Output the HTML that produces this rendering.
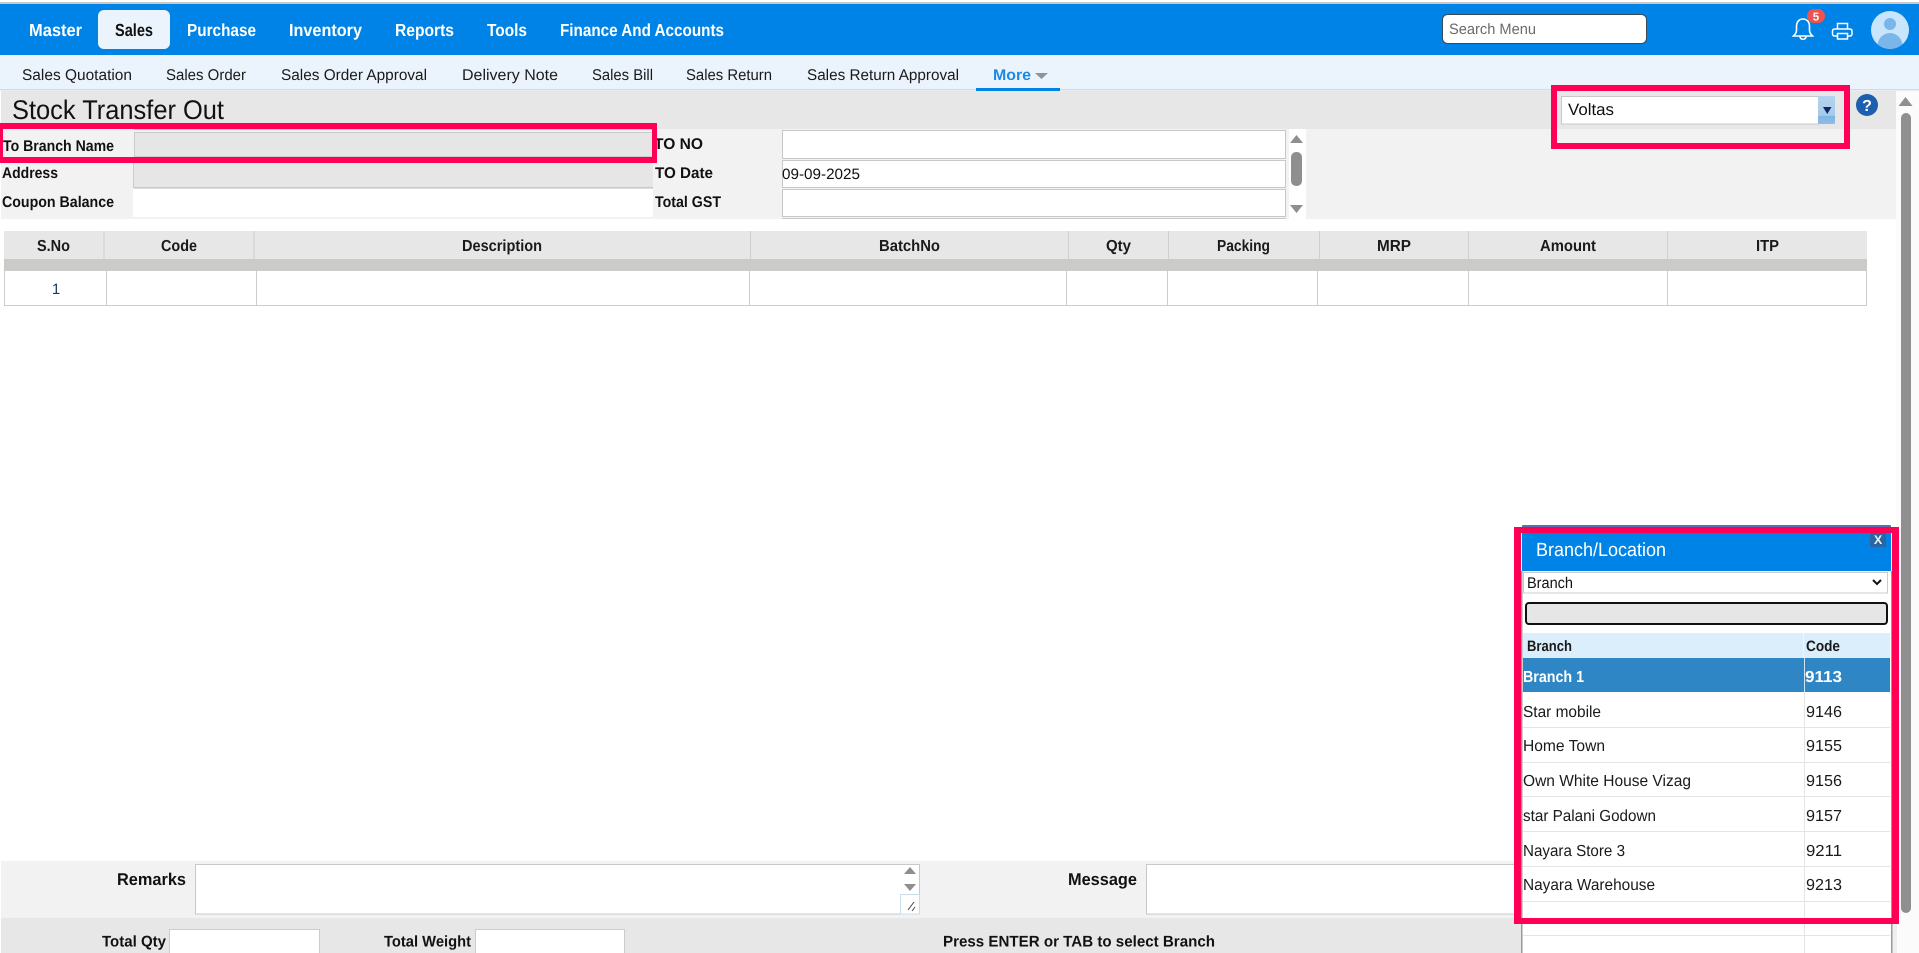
<!DOCTYPE html>
<html lang="en">
<head>
<meta charset="utf-8">
<title>Stock Transfer Out</title>
<style>
html,body{margin:0;padding:0;background:#fff;width:1919px;height:953px;overflow:hidden}
svg{display:block}
text{font-family:"Liberation Sans",Arial,sans-serif;fill:#111;text-rendering:geometricPrecision}
.nav{font-size:17.500px;font-weight:700;fill:#fff}
.sub{font-size:15.500px;fill:#1a1a1a}
.lab{font-size:15.500px;font-weight:700;fill:#111}
.hd{font-size:16px;font-weight:700;fill:#1a1a1a}
.big{font-size:17px;font-weight:700;fill:#111}
.row{font-size:16px;fill:#1a1a1a}
</style>
</head>
<body>
<svg xmlns="http://www.w3.org/2000/svg" width="1919" height="953" viewBox="0 0 1919 953">
<defs>
<linearGradient id="vb" x1="0" y1="0" x2="0" y2="1"><stop offset="0" stop-color="#b5d3ee"/><stop offset=".7" stop-color="#a5cbeb"/><stop offset=".72" stop-color="#7fb5e3"/><stop offset="1" stop-color="#8dbde6"/></linearGradient>
<clipPath id="av"><circle cx="1890" cy="30" r="19"/></clipPath>
</defs>
<rect width="1919" height="953" fill="#fff"/>
<!-- top bars -->
<rect y="2" width="1919" height="2" fill="#c9c9c9"/>
<rect y="4" width="1919" height="51" fill="#0083e6"/>
<rect x="98" y="10" width="72" height="39" rx="6" fill="#ebf4fc"/>
<text class="nav" x="29" y="36" textLength="53" lengthAdjust="spacingAndGlyphs">Master</text>
<text class="nav" x="115" y="36" textLength="38" lengthAdjust="spacingAndGlyphs" style="fill:#111">Sales</text>
<text class="nav" x="187" y="36" textLength="69" lengthAdjust="spacingAndGlyphs">Purchase</text>
<text class="nav" x="289" y="36" textLength="73" lengthAdjust="spacingAndGlyphs">Inventory</text>
<text class="nav" x="395" y="36" textLength="59" lengthAdjust="spacingAndGlyphs">Reports</text>
<text class="nav" x="487" y="36" textLength="40" lengthAdjust="spacingAndGlyphs">Tools</text>
<text class="nav" x="560" y="36" textLength="164" lengthAdjust="spacingAndGlyphs">Finance And Accounts</text>
<!-- search -->
<rect x="1442.500" y="14.500" width="204" height="29" rx="5" fill="#fff" stroke="#3a4a55"/>
<text x="1449" y="34" font-size="15" style="fill:#6b6b6b" textLength="87" lengthAdjust="spacingAndGlyphs">Search Menu</text>
<!-- bell -->
<path d="M1803 19c-4 0-6.500 3-6.500 7.500v4c0 2.500-1.500 4-3 5.500h19c-1.500-1.500-3-3-3-5.500v-4c0-4.500-2.500-7.500-6.500-7.500z" fill="none" stroke="#fff" stroke-width="1.600"/>
<path d="M1800 36.500a3 2.800 0 0 0 6 0" fill="none" stroke="#fff" stroke-width="1.600"/>
<rect x="1807" y="9" width="18" height="14" rx="7" fill="#ef5350"/>
<text x="1816" y="20.500" font-size="11.500" font-weight="700" text-anchor="middle" style="fill:#fff">5</text>
<!-- printer -->
<path d="M1837.500 29v-5.500h10V29M1837.500 36h-3a2 2 0 0 1-2-2v-3a2 2 0 0 1 2-2h15.500a2 2 0 0 1 2 2v3a2 2 0 0 1-2 2h-2.500M1837.500 33.500h10v5.500h-10z" fill="none" stroke="#fff" stroke-width="1.500"/>
<!-- avatar -->
<circle cx="1890" cy="30" r="19" fill="#c8e5fc"/>
<g clip-path="url(#av)"><circle cx="1890" cy="24" r="6" fill="#7ab6ea"/><ellipse cx="1890" cy="46" rx="12.500" ry="13" fill="#7ab6ea"/></g>
<!-- subnav -->
<rect y="55" width="1919" height="34" fill="#ebf4fc"/>
<rect y="89" width="1919" height="1.500" fill="#cfdbe6"/>
<text class="sub" x="22" y="80" textLength="110" lengthAdjust="spacingAndGlyphs">Sales Quotation</text>
<text class="sub" x="166" y="80" textLength="80" lengthAdjust="spacingAndGlyphs">Sales Order</text>
<text class="sub" x="281" y="80" textLength="146" lengthAdjust="spacingAndGlyphs">Sales Order Approval</text>
<text class="sub" x="462" y="80" textLength="96" lengthAdjust="spacingAndGlyphs">Delivery Note</text>
<text class="sub" x="592" y="80" textLength="61" lengthAdjust="spacingAndGlyphs">Sales Bill</text>
<text class="sub" x="686" y="80" textLength="86" lengthAdjust="spacingAndGlyphs">Sales Return</text>
<text class="sub" x="807" y="80" textLength="152" lengthAdjust="spacingAndGlyphs">Sales Return Approval</text>
<text x="993" y="80" font-size="15.500" font-weight="700" style="fill:#1e88e5" textLength="38" lengthAdjust="spacingAndGlyphs">More</text>
<path d="M1035 73h13l-6.500 6z" fill="#8a949c"/>
<rect x="976" y="88" width="84" height="3" fill="#0083e6"/>
<!-- heading band + form -->
<rect x="1" y="91" width="1895" height="38" fill="#e7e7e7"/>
<rect x="1" y="129" width="1895" height="90" fill="#f2f2f2"/>
<text x="12" y="119" font-size="27" style="fill:#111" textLength="212" lengthAdjust="spacingAndGlyphs">Stock Transfer Out</text>
<!-- left form -->
<rect x="134" y="129" width="518" height="1" fill="#ccc"/>
<rect x="134.500" y="132.500" width="518" height="24" fill="#e6e6e6" stroke="#cbcbcb"/>
<rect x="134" y="163" width="519" height="25" fill="#e6e6e6"/>
<rect x="134" y="187" width="519" height="1.500" fill="#c8c8c8"/>
<rect x="133" y="163" width="1" height="25" fill="#ccc"/>
<rect x="133" y="189" width="520" height="28" fill="#fff"/>
<text class="lab" x="3" y="151" textLength="111" lengthAdjust="spacingAndGlyphs">To Branch Name</text>
<text class="lab" x="2" y="178" textLength="56" lengthAdjust="spacingAndGlyphs">Address</text>
<text class="lab" x="2" y="207" textLength="112" lengthAdjust="spacingAndGlyphs">Coupon Balance</text>
<text class="lab" x="654" y="149" textLength="49" lengthAdjust="spacingAndGlyphs">TO NO</text>
<text class="lab" x="655" y="178" textLength="58" lengthAdjust="spacingAndGlyphs">TO Date</text>
<text class="lab" x="655" y="207" textLength="66" lengthAdjust="spacingAndGlyphs">Total GST</text>
<!-- right inputs -->
<rect x="782.500" y="130.500" width="503" height="28" fill="#fff" stroke="#c8c8c8"/>
<rect x="782.500" y="160.500" width="503" height="27" fill="#fff" stroke="#c8c8c8"/>
<rect x="782.500" y="189.500" width="503" height="27" fill="#fff" stroke="#c8c8c8"/>
<rect x="782" y="218" width="504" height="1" fill="#c8c8c8"/>
<text x="782" y="179" font-size="15" font-weight="400" style="fill:#111" textLength="78" lengthAdjust="spacingAndGlyphs">09-09-2025</text>
<!-- inner scrollbar -->
<rect x="1289" y="129" width="17" height="90" fill="#fff"/>
<path d="M1296.500 135l6.500 8h-13z" fill="#8f8f8f"/>
<rect x="1291" y="152" width="11" height="34" rx="5" fill="#8f8f8f"/>
<path d="M1296.500 213l-6.500-8h13z" fill="#8f8f8f"/>
<!-- voltas -->
<rect x="1561.500" y="96.500" width="257" height="27.500" fill="#fff" stroke="#c8c8c8"/>
<rect x="1818" y="96" width="17" height="28" rx="1" fill="url(#vb)"/>
<path d="M1823 107h8.500l-4.250 7z" fill="#12275f"/>
<text x="1568" y="115" font-size="16.500" style="fill:#111" textLength="46" lengthAdjust="spacingAndGlyphs">Voltas</text>
<!-- help -->
<circle cx="1867" cy="105" r="11" fill="#1b5fae"/>
<text x="1867" y="111" font-size="16" font-weight="700" text-anchor="middle" style="fill:#fff">?</text>
<!-- table -->
<rect x="4" y="231" width="1863" height="28" fill="#e7e7e7"/>
<rect x="4" y="259" width="1863" height="12" fill="#cbcbc9"/>
<g fill="#cfcfcf">
<rect x="103.500" y="231" width="1" height="28"/><rect x="253.500" y="231" width="1" height="28"/><rect x="750" y="231" width="1" height="28"/><rect x="1068" y="231" width="1" height="28"/><rect x="1168" y="231" width="1" height="28"/><rect x="1319" y="231" width="1" height="28"/><rect x="1468" y="231" width="1" height="28"/><rect x="1667" y="231" width="1" height="28"/>
</g>
<g fill="#ccc">
<rect x="4" y="271" width="1" height="35"/><rect x="106" y="271" width="1" height="35"/><rect x="256" y="271" width="1" height="35"/><rect x="749" y="271" width="1" height="35"/><rect x="1066" y="271" width="1" height="35"/><rect x="1167" y="271" width="1" height="35"/><rect x="1317" y="271" width="1" height="35"/><rect x="1468" y="271" width="1" height="35"/><rect x="1667" y="271" width="1" height="35"/><rect x="1866" y="271" width="1" height="35"/><rect x="4" y="305" width="1863" height="1"/>
</g>
<text class="hd" x="37" y="251" textLength="33" lengthAdjust="spacingAndGlyphs">S.No</text>
<text class="hd" x="161" y="251" textLength="36" lengthAdjust="spacingAndGlyphs">Code</text>
<text class="hd" x="462" y="251" textLength="80" lengthAdjust="spacingAndGlyphs">Description</text>
<text class="hd" x="879" y="251" textLength="61" lengthAdjust="spacingAndGlyphs">BatchNo</text>
<text class="hd" x="1106" y="251" textLength="25" lengthAdjust="spacingAndGlyphs">Qty</text>
<text class="hd" x="1217" y="251" textLength="53" lengthAdjust="spacingAndGlyphs">Packing</text>
<text class="hd" x="1377" y="251" textLength="34" lengthAdjust="spacingAndGlyphs">MRP</text>
<text class="hd" x="1540" y="251" textLength="56" lengthAdjust="spacingAndGlyphs">Amount</text>
<text class="hd" x="1756" y="251" textLength="23" lengthAdjust="spacingAndGlyphs">ITP</text>
<text x="56" y="294" font-size="15" text-anchor="middle" style="fill:#1a3d6d">1</text>
<!-- bottom -->
<rect x="1" y="861" width="1521" height="57" fill="#f2f2f2"/>
<rect x="1" y="918" width="1521" height="35" fill="#e7e7e7"/>
<rect x="195.500" y="864.500" width="724" height="49.500" fill="#fff" stroke="#c8c8c8"/>
<path d="M910 867l6 7h-12z" fill="#8f8f8f"/>
<path d="M910 891l-6-7h12z" fill="#8f8f8f"/>
<rect x="900.500" y="894.500" width="19" height="19.500" fill="#fff" stroke="#c9dde9"/>
<path d="M908 910l6-8M912 911l3-4" stroke="#444" stroke-width="1" fill="none"/>
<rect x="1146.500" y="864.500" width="390" height="49.500" fill="#fff" stroke="#c8c8c8"/>
<text class="big" x="117" y="885" textLength="69" lengthAdjust="spacingAndGlyphs">Remarks</text>
<text class="big" x="1068" y="885" textLength="69" lengthAdjust="spacingAndGlyphs">Message</text>
<text class="lab" x="102" y="946.500" textLength="64" lengthAdjust="spacingAndGlyphs">Total Qty</text>
<rect x="169.500" y="929.500" width="150" height="24" fill="#fff" stroke="#ccc"/>
<text class="lab" x="384" y="946.500" textLength="87" lengthAdjust="spacingAndGlyphs">Total Weight</text>
<rect x="475.500" y="929.500" width="149" height="24" fill="#fff" stroke="#ccc"/>
<text class="lab" x="943" y="946.500" textLength="272" lengthAdjust="spacingAndGlyphs">Press ENTER or TAB to select Branch</text>
<!-- page scrollbar -->
<rect x="1896" y="91" width="23" height="862" fill="#fbfbfb"/>
<rect x="1891" y="530" width="6" height="423" fill="#efefef"/>
<path d="M1905.500 97l7 9h-14z" fill="#8f8f8f"/>
<rect x="1901" y="113" width="10" height="800" rx="5" fill="#8f8f8f"/>
<!-- popup -->
<rect x="1522" y="525" width="369" height="428" fill="#fff"/>
<rect x="1522" y="525" width="369" height="3" rx="1" fill="#5b6fb0"/>
<rect x="1522" y="528" width="369" height="43" fill="#0083e6"/>
<rect x="1521" y="571" width="1.500" height="382" fill="#9a9a9a"/>
<rect x="1891" y="571" width="1.500" height="382" fill="#9a9a9a"/>
<text x="1536" y="556" font-size="19" style="fill:#fff" textLength="130" lengthAdjust="spacingAndGlyphs">Branch/Location</text>
<rect x="1870" y="533" width="16" height="14" fill="#2a669f"/>
<text x="1878" y="544" font-size="12.500" font-weight="700" text-anchor="middle" style="fill:#e8f2fb">X</text>
<rect x="1523.500" y="572.500" width="364" height="20.500" fill="#fff" stroke="#ccc"/>
<text x="1527" y="588" font-size="15.500" style="fill:#111" textLength="46" lengthAdjust="spacingAndGlyphs">Branch</text>
<path d="M1873 580l4 4 4-4" fill="none" stroke="#111" stroke-width="2"/>
<rect x="1526" y="603" width="361" height="21" rx="3" fill="#e6e6e6" stroke="#111" stroke-width="2"/>
<rect x="1523" y="633" width="367" height="25" fill="#daeefc"/>
<rect x="1803" y="633" width="1" height="25" fill="#eef7fe"/>
<text x="1527" y="651" font-size="15" font-weight="700" style="fill:#1a1a1a" textLength="45" lengthAdjust="spacingAndGlyphs">Branch</text>
<text x="1806" y="651" font-size="15" font-weight="700" style="fill:#1a1a1a" textLength="34" lengthAdjust="spacingAndGlyphs">Code</text>
<rect x="1523" y="658" width="367" height="34" fill="#2f86c5"/>
<text x="1523" y="682" font-size="16" font-weight="700" style="fill:#fff" textLength="61" lengthAdjust="spacingAndGlyphs">Branch 1</text>
<text x="1805" y="682" font-size="16" font-weight="700" style="fill:#fff" textLength="37" lengthAdjust="spacingAndGlyphs">9113</text>
<g fill="#e4e4e4">
<rect x="1523" y="727" width="367" height="1"/><rect x="1523" y="762" width="367" height="1"/><rect x="1523" y="796" width="367" height="1"/><rect x="1523" y="831" width="367" height="1"/><rect x="1523" y="866" width="367" height="1"/><rect x="1523" y="901" width="367" height="1"/><rect x="1523" y="935" width="367" height="1"/>
<rect x="1804" y="692" width="1" height="261"/>
</g>
<rect x="1804" y="658" width="1" height="34" fill="#cfe3f2"/>
<text class="row" x="1523" y="717" textLength="78" lengthAdjust="spacingAndGlyphs">Star mobile</text>
<text class="row" x="1806" y="717" textLength="36" lengthAdjust="spacingAndGlyphs">9146</text>
<text class="row" x="1523" y="751" textLength="82" lengthAdjust="spacingAndGlyphs">Home Town</text>
<text class="row" x="1806" y="751" textLength="36" lengthAdjust="spacingAndGlyphs">9155</text>
<text class="row" x="1523" y="786" textLength="168" lengthAdjust="spacingAndGlyphs">Own White House Vizag</text>
<text class="row" x="1806" y="786" textLength="36" lengthAdjust="spacingAndGlyphs">9156</text>
<text class="row" x="1523" y="821" textLength="133" lengthAdjust="spacingAndGlyphs">star Palani Godown</text>
<text class="row" x="1806" y="821" textLength="36" lengthAdjust="spacingAndGlyphs">9157</text>
<text class="row" x="1523" y="856" textLength="102" lengthAdjust="spacingAndGlyphs">Nayara Store 3</text>
<text class="row" x="1806" y="856" textLength="36" lengthAdjust="spacingAndGlyphs">9211</text>
<text class="row" x="1523" y="890" textLength="132" lengthAdjust="spacingAndGlyphs">Nayara Warehouse</text>
<text class="row" x="1806" y="890" textLength="36" lengthAdjust="spacingAndGlyphs">9213</text>
<!-- pink annotation boxes -->
<path fill="#ff0055" fill-rule="evenodd" d="M0 123H657V163H0ZM3 129V157H652V129Z"/>
<path fill="#ff0055" fill-rule="evenodd" d="M1551 85H1850V149H1551ZM1557 91V143H1844V91Z"/>
<path fill="#ff0055" fill-rule="evenodd" d="M1514 527H1899V924H1514ZM1521 533V918H1892V533Z"/>
</svg>
</body>
</html>
